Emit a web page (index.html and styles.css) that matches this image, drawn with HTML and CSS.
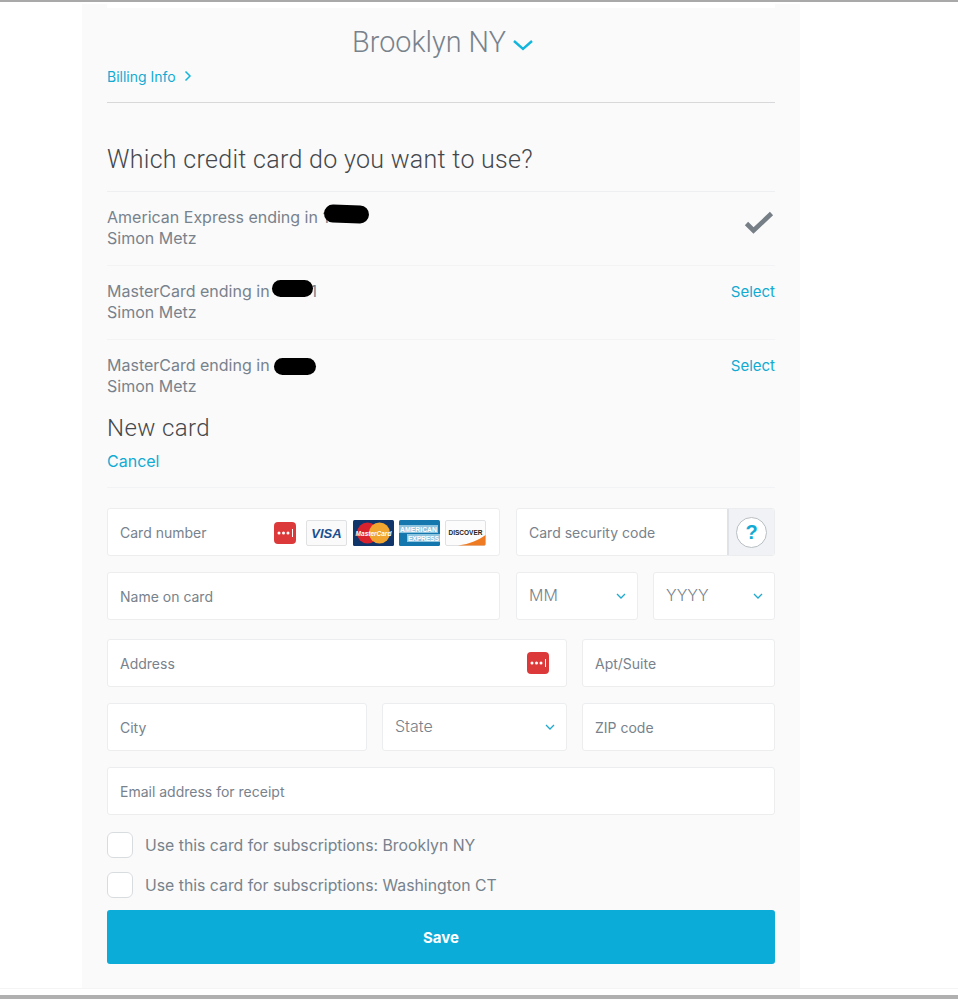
FILE: index.html
```html
<!DOCTYPE html>
<html lang="en">
<head>
    <meta charset="UTF-8">
    <meta name="viewport" content="width=device-width, initial-scale=1.0">
    <title>Billing Info</title>
    <link rel="stylesheet" href="styles.css">
</head>
<body>
<div class="panel">
    <div class="top-strip"></div>
    <div class="location">
        <span>Brooklyn NY</span>
        <svg class="location-chevron" width="22" height="12" viewBox="0 0 22 12"><path d="M2 2l9 8 9-8" fill="none" stroke="#12b5dc" stroke-width="2.4"/></svg>
    </div>
    <a class="billing-link">Billing Info
        <svg width="8" height="12" viewBox="0 0 8 12"><path d="M1.5 1.5L6 6l-4.500 4.500" fill="none" stroke="#12b5dc" stroke-width="1.500"/></svg>
    </a>

    <h2 class="question">Which credit card do you want to use?</h2>

    <div class="card-row">
        <div class="card-text">
            <div>American Express ending in <span class="hidden-digits digits-amex">1</span></div>
            <div>Simon Metz</div>
        </div>
        <svg class="check" width="30" height="24" viewBox="0 0 30 24"><path d="M2.500 12.500l7 7L27.500 2.500" fill="none" stroke="#767e86" stroke-width="4.600"/></svg>
    </div>
    <div class="card-row">
        <div class="card-text">
            <div>MasterCard ending in<span class="hidden-digits digits-mc1">1</span></div>
            <div>Simon Metz</div>
        </div>
        <a class="select-link">Select</a>
    </div>
    <div class="card-row card-row-last">
        <div class="card-text">
            <div>MasterCard ending in <span class="hidden-digits digits-mc2"></span></div>
            <div>Simon Metz</div>
        </div>
        <a class="select-link">Select</a>
    </div>

    <h3 class="new-card">New card</h3>
    <a class="cancel-link">Cancel</a>

    <form class="card-form">
        <div class="form-row form-row-a">
            <div class="field field-number">
                <span>Card number</span>
                <div class="card-logos">
                    <svg class="pass-icon" width="22" height="22" viewBox="0 0 22 22"><rect width="22" height="22" rx="4" fill="#dc3a3a"/><circle cx="5" cy="11" r="1.500" fill="#fff"/><circle cx="9.500" cy="11" r="1.500" fill="#fff"/><circle cx="14" cy="11" r="1.500" fill="#fff"/><rect x="18" y="7" width="1" height="8" fill="#fff"/></svg>
                    <svg class="logo logo-first" width="41" height="26" viewBox="0 0 41 26"><rect x=".5" y=".5" width="40" height="25" rx="1.500" fill="#fafafa" stroke="#dfe1e3"/><text x="20.500" y="18" class="visa-text">VISA</text></svg>
                    <svg class="logo" width="41" height="26" viewBox="0 0 41 26"><rect width="41" height="26" rx="1.500" fill="#10356b"/><circle cx="14.500" cy="13" r="10.500" fill="#d8232f"/><circle cx="26.500" cy="13" r="10.500" fill="#f0a531"/><text x="20.500" y="15.500" class="mc-text">MasterCard</text></svg>
                    <svg class="logo" width="41" height="26" viewBox="0 0 41 26"><rect width="41" height="26" rx="1.500" fill="#1478ae"/><rect y="5" width="39" height="8" fill="#8fc4de"/><rect x="8" y="14" width="33" height="8" fill="#8fc4de"/><text x="1" y="12" class="amex-text" textLength="37">AMERICAN</text><text x="9" y="21" class="amex-text" textLength="31">EXPRESS</text></svg>
                    <svg class="logo" width="41" height="26" viewBox="0 0 41 26"><rect x=".5" y=".5" width="40" height="25" rx="1.500" fill="#fcfcfc" stroke="#dfe1e3"/><path d="M13 25.500C25 24 34 20 40.500 15v9a1.500 1.500 0 0 1-1.500 1.500z" fill="#ee7a22"/><text x="20.500" y="15" class="discover-text">DISCOVER</text></svg>
                </div>
            </div>
            <div class="field field-code">
                <span class="code-label">Card security code</span>
                <div class="code-help"><span class="help-circle">?</span></div>
            </div>
        </div>
        <div class="form-row form-row-b">
            <div class="field field-number"><span>Name on card</span></div>
            <div class="field field-date select-field"><span class="select-value">MM</span><svg class="select-chevron" width="10" height="6" viewBox="0 0 10 6"><path d="M1 1l4 4 4-4" fill="none" stroke="#1fa9cd" stroke-width="1.300"/></svg></div>
            <div class="field field-date select-field"><span class="select-value">YYYY</span><svg class="select-chevron" width="10" height="6" viewBox="0 0 10 6"><path d="M1 1l4 4 4-4" fill="none" stroke="#1fa9cd" stroke-width="1.300"/></svg></div>
        </div>
        <div class="form-row form-row-c">
            <div class="field field-address">
                <span>Address</span>
                <svg class="pass-icon" width="22" height="22" viewBox="0 0 22 22"><rect width="22" height="22" rx="4" fill="#dc3a3a"/><circle cx="5" cy="11" r="1.500" fill="#fff"/><circle cx="9.500" cy="11" r="1.500" fill="#fff"/><circle cx="14" cy="11" r="1.500" fill="#fff"/><rect x="18" y="7" width="1" height="8" fill="#fff"/></svg>
            </div>
            <div class="field field-apt"><span>Apt/Suite</span></div>
        </div>
        <div class="form-row form-row-d">
            <div class="field field-city"><span>City</span></div>
            <div class="field field-state select-field"><span class="select-value">State</span><svg class="select-chevron" width="10" height="6" viewBox="0 0 10 6"><path d="M1 1l4 4 4-4" fill="none" stroke="#1fa9cd" stroke-width="1.300"/></svg></div>
            <div class="field field-apt"><span>ZIP code</span></div>
        </div>
        <div class="form-row form-row-e">
            <div class="field field-full"><span>Email address for receipt</span></div>
        </div>
        <label class="check-row check-row-first"><span class="check-box"></span>Use this card for subscriptions: Brooklyn NY</label>
        <label class="check-row"><span class="check-box"></span>Use this card for subscriptions: Washington CT</label>
        <button class="save-button" type="button">Save</button>
    </form>
</div>
<div class="page-end"></div>
</body>
</html>
```
FILE: styles.css
```css
body {
    margin: 0;
    font-family: "Inter", "Liberation Sans", sans-serif;
    background: #fff;
    color: #78828c;
    border-top: 2px solid #a9a9a9;
}

a {
    color: #12aad2;
}

.panel {
    width: 668px;
    height: 984px;
    margin: 2px 0 0 82px;
    padding: 0 25px;
    background: #fafafb;
    overflow: hidden;
}

.top-strip {
    height: 4px;
    background: #fff;
}

.location {
    display: flex;
    justify-content: center;
    align-items: center;
    height: 32px;
    margin-top: 18px;
    padding-left: 6px;
    font-size: 28.800px;
    font-weight: 300;
    color: #78828c;
    font-family: "Roboto", sans-serif;
}

.location-chevron {
    margin: 6px 2px 0 6px;
}

.billing-link {
    display: flex;
    align-items: center;
    gap: 8px;
    height: 18px;
    margin-top: 9px;
    padding-bottom: 17px;
    border-bottom: 1px solid #d6d8da;
    font-size: 14px;
}

.question {
    margin: 0;
    padding: 41px 0 15px;
    height: 32px;
    line-height: 32px;
    font-size: 25px;
    font-weight: 300;
    color: #44484c;
    font-family: "Roboto", sans-serif;
    letter-spacing: .3px;
    border-bottom: 1px solid #eeeff0;
}

.card-row {
    display: flex;
    justify-content: space-between;
    align-items: flex-start;
    height: 73px;
    border-bottom: 1px solid #f2f3f4;
    font-size: 16px;
}

.card-row-last {
    height: 72px;
    border-bottom: none;
}

.card-text {
    padding-top: 15px;
    line-height: 21px;
}

.hidden-digits {
    position: relative;
    display: inline-block;
}

.hidden-digits::after {
    content: "";
    position: absolute;
    top: -1px;
    height: 17px;
    background: #000;
    border-radius: 9px;
}

.digits-amex::after {
    top: -2px;
    left: 2px;
    width: 45px;
    height: 18px;
    transform: rotate(2deg);
}

.digits-mc1 {
    padding-left: 41px;
}

.digits-mc1::after {
    left: 2px;
    width: 41px;
}

.digits-mc2::after {
    left: 0;
    width: 42px;
    top: -13px;
}

.check {
    margin: 19px 1px 0 0;
}

.select-link {
    margin-top: 16px;
    font-size: 15px;
}

.new-card {
    margin: 0;
    height: 32px;
    line-height: 32px;
    font-size: 24px;
    font-weight: 300;
    color: #44484c;
    font-family: "Roboto", sans-serif;
    letter-spacing: .4px;
}

.cancel-link {
    display: block;
    height: 44px;
    padding-top: 5px;
    box-sizing: border-box;
    line-height: 24px;
    font-size: 16px;
    border-bottom: 1px solid #f2f3f4;
}

.card-form {
    padding-top: 20px;
}

.form-row {
    display: flex;
    gap: 16px;
}

.form-row-b {
    margin-top: 16px;
}

.form-row-c {
    margin-top: 19px;
    gap: 15px;
}

.form-row-d {
    margin-top: 16px;
    gap: 15px;
}

.form-row-e {
    margin-top: 16px;
}

.field {
    display: flex;
    align-items: center;
    justify-content: space-between;
    height: 48px;
    box-sizing: border-box;
    padding: 0 13px 0 12px;
    background: #fff;
    border: 1px solid #ecedef;
    border-radius: 3px;
    font-size: 14px;
}

.select-field {
    padding: 0 11px 0 12px;
}

.field-number {
    width: 393px;
}

.field-code {
    width: 259px;
    padding-right: 0;
    overflow: hidden;
}

.field-date {
    width: 122px;
}

.form-row-b .field-date + .field-date {
    margin-left: -1px;
}

.field-address {
    width: 460px;
    padding-right: 17px;
}

.field-apt {
    width: 193px;
}

.field-city {
    width: 260px;
}

.field-state {
    width: 185px;
}

.field-full {
    width: 668px;
}

.card-logos {
    display: flex;
    align-items: center;
    padding-top: 1px;
}

.pass-icon {
    flex: none;
}

.logo {
    margin-left: 5px;
}

.logo-first {
    margin-left: 10px;
    margin-right: 1px;
}

.visa-text {
    font: italic 700 13px "Liberation Sans", sans-serif;
    fill: #1a4f8f;
    text-anchor: middle;
}

.mc-text {
    font: italic 700 6.500px "Liberation Sans", sans-serif;
    fill: #fff;
    text-anchor: middle;
}

.amex-text {
    font: 700 6.800px "Liberation Sans", sans-serif;
    fill: #fff;
}

.discover-text {
    font: 700 6.500px "Liberation Sans", sans-serif;
    fill: #222;
    text-anchor: middle;
}

.code-help {
    display: flex;
    align-items: center;
    justify-content: center;
    width: 47px;
    height: 100%;
    background: #f0f2f5;
    border-left: 2px solid #dfe3e7;
    box-sizing: border-box;
}

.help-circle {
    display: flex;
    align-items: center;
    justify-content: center;
    width: 31px;
    height: 31px;
    box-sizing: border-box;
    border: 1px solid #b9bec3;
    border-radius: 50%;
    background: #fff;
    color: #12aad2;
    font: 700 20px "Liberation Sans", sans-serif;
}

.select-value {
    margin-top: -2px;
    font-size: 16px;
    font-weight: 300;
}

.check-row {
    display: flex;
    align-items: center;
    gap: 12px;
    height: 26px;
    margin-top: 14px;
    font-size: 15.800px;
}

.check-row-first {
    margin-top: 17px;
}

.check-box {
    width: 26px;
    height: 26px;
    box-sizing: border-box;
    background: #fff;
    border: 1px solid #d9dcdf;
    border-radius: 6px;
}

.save-button {
    display: block;
    width: 100%;
    height: 54px;
    margin-top: 12px;
    background: #0cacd9;
    color: #fff;
    border: none;
    border-radius: 3px;
    font-family: "Inter", sans-serif;
    font-size: 15px;
    font-weight: 700;
}

.page-end {
    height: 6px;
    border-top: 1px solid #f4f4f4;
    border-bottom: 4px solid #b0b0b0;
}
```
